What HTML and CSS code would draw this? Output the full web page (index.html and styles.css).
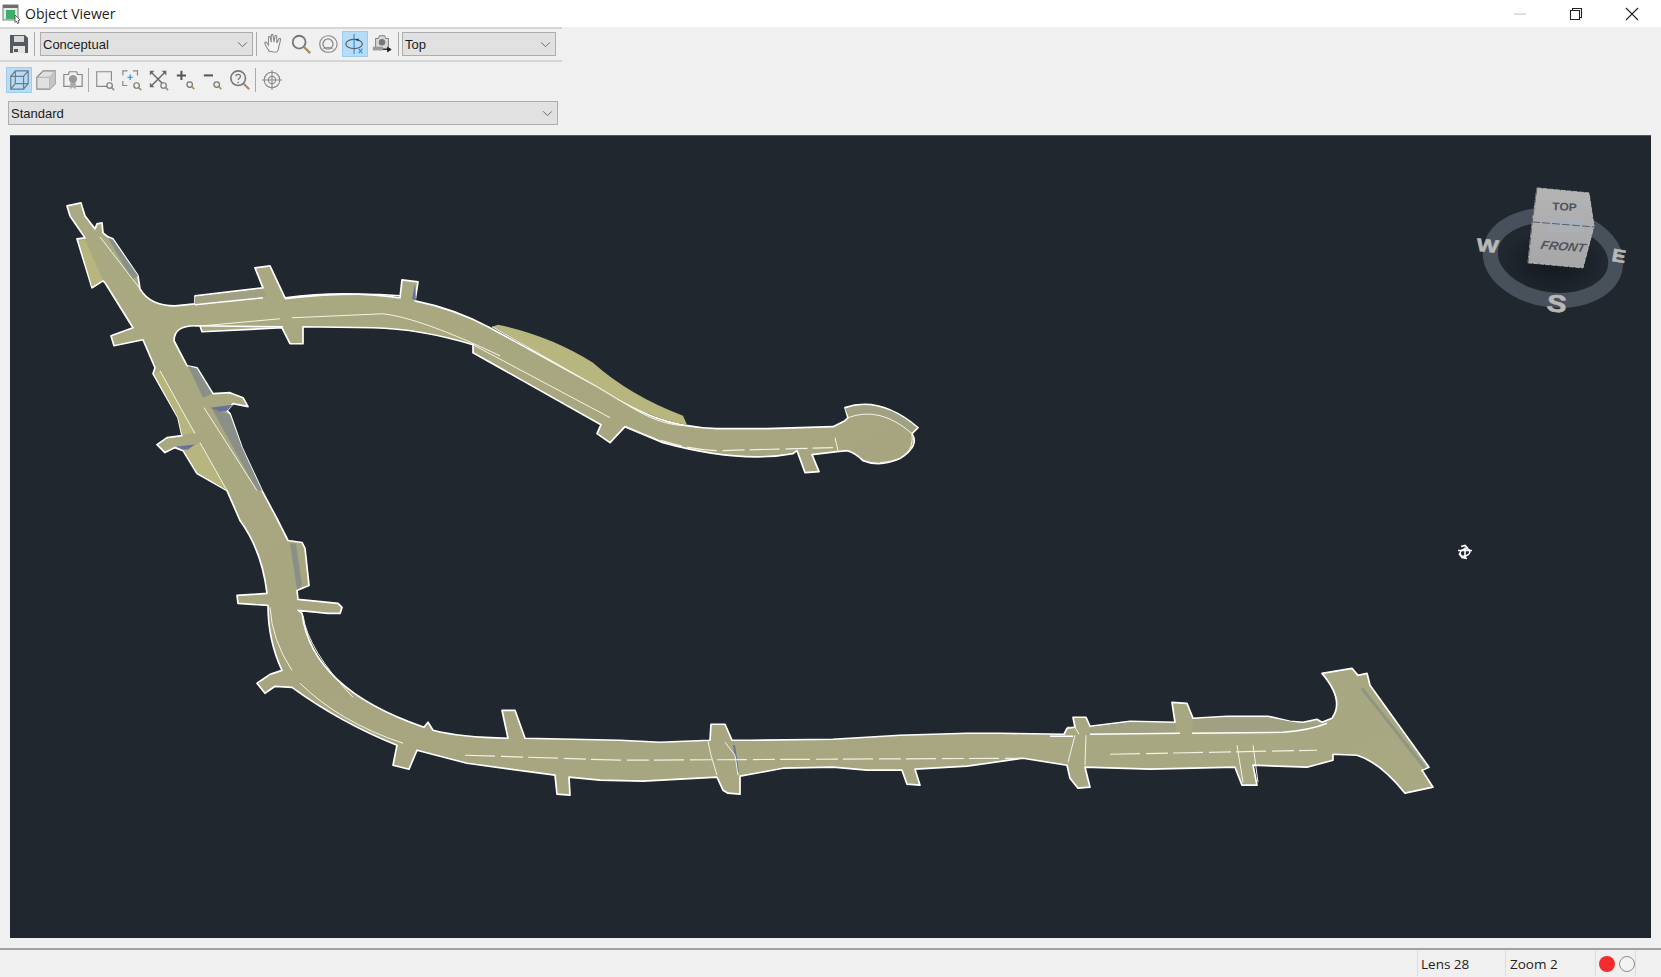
FILE: index.html
```html
<!DOCTYPE html>
<html lang="en">
<head>
<meta charset="utf-8">
<title>Object Viewer</title>
<link rel="stylesheet" href="styles.css">
</head>
<body>
<div class="app">
  <header class="titlebar">
    <svg class="appicon" viewBox="0 0 20 20"><rect x="1" y="1" width="15" height="15" fill="#e8e8e8" stroke="#7a7a7a"/><rect x="1" y="1" width="15" height="3" fill="#6d6d6d"/><rect x="4" y="6" width="9" height="9" fill="#3fae6c"/><path d="M13 11l5 5-2 .5 1 2.500-1.500.5-1-2.500-1.500 1.500z" fill="#fff" stroke="#444" stroke-width=".8"/></svg>
    <span class="title">Object Viewer</span>
    <div class="winbtns">
      <svg class="winbtn" viewBox="0 0 14 14"><path d="M1 7h12" stroke="#c4c4c4" fill="none"/></svg>
      <svg class="winbtn" viewBox="0 0 14 14"><path d="M1.500 3.500h9v9h-9zM3.500 3.500v-2h9v9h-2" stroke="#222" fill="none" stroke-width="1.100"/></svg>
      <svg class="winbtn" viewBox="0 0 14 14"><path d="M1 1l12 12M13 1L1 13" stroke="#222" fill="none" stroke-width="1.100"/></svg>
    </div>
  </header>

  <section class="tools">
    <div class="row row1">
      <svg class="ico save" viewBox="0 0 20 20"><path d="M1 1h15l3 3v15H1z" fill="#555a60"/><rect x="5" y="2" width="10" height="6" fill="#d8d8d8"/><rect x="4" y="12" width="12" height="7" fill="#e4e4e4"/><rect x="5" y="15" width="4" height="3" fill="#555a60"/></svg>
      <i class="sep"></i>
      <div class="combo c1"><span>Conceptual</span><svg class="chev" viewBox="0 0 12 8"><path d="M1 1.500l5 5 5-5" fill="none" stroke="#666" stroke-width="1.100"/></svg></div>
      <i class="sep"></i>
      <svg class="ico" viewBox="0 0 24 24"><path d="M7 20c-2-3-5-7-5-9s2-1 4 2l0-8c0-2 2-2 2 0l1 5 0-7c0-2 2-2 2 0l1 7 1-6c0-2 2-2 2 0l0 7 2-4c1-2 3-1 2 1l-2 8c0 3-2 5-3 5z" fill="#f4f4f4" stroke="#8a8a8a" stroke-width="1.200"/></svg>
      <svg class="ico" viewBox="0 0 24 24"><circle cx="10" cy="10" r="7" fill="#eef0f2" stroke="#777" stroke-width="2"/><path d="M15 15l7 7" stroke="#a98c60" stroke-width="2.600"/></svg>
      <svg class="ico" viewBox="0 0 24 24"><path d="M12 3c5 0 9 3 10 9 0 5-4 9-9 9C7 21 3 18 3 12c0-5 4-9 9-9z" fill="none" stroke="#8a8a8a" stroke-width="1.300"/><circle cx="12" cy="12" r="5.500" fill="none" stroke="#8a8a8a" stroke-width="1.400"/><path d="M6 18c2-3 10-3 12 0" fill="none" stroke="#8a8a8a"/></svg>
      <span class="btn on"><svg class="ico" viewBox="0 0 24 24"><path d="M11 1v22" stroke="#2a8fe0" stroke-width="1.200"/><ellipse cx="11" cy="12" rx="9" ry="5" fill="none" stroke="#5b6268" stroke-width="1.300"/><path d="M12 7l4-1v3z" fill="#333"/><path d="M16 17l4 5M20 17l-4 5" stroke="#2a8fe0" stroke-width="1.200"/></svg></span>
      <svg class="ico" viewBox="0 0 24 24"><path d="M5 6h3l1-3h6l1 3h3v11H5z" fill="#d8d8d8" stroke="#777"/><circle cx="12" cy="10" r="3.500" fill="#777"/><rect x="2" y="15" width="11" height="4" fill="#999"/><path d="M13 18h7M18 15.500l4 2.500-4 2.500z" stroke="#222" fill="#222"/></svg>
      <i class="sep"></i>
      <div class="combo c2"><span>Top</span><svg class="chev" viewBox="0 0 12 8"><path d="M1 1.500l5 5 5-5" fill="none" stroke="#666" stroke-width="1.100"/></svg></div>
    </div>
    <div class="row row2">
      <span class="btn on"><svg class="ico" viewBox="0 0 24 24"><path d="M3 8h14v14H3zM8 2h14v14H8zM3 8l5-6M17 8l5-6M3 22l5-6M17 22l5-6" fill="none" stroke="#6d7c85" stroke-width="1.300"/></svg></span>
      <svg class="ico" viewBox="0 0 24 24"><path d="M2 9l7-7h13v14l-6 6H2z" fill="#e0e0e0" stroke="#888" stroke-width="1.200"/><path d="M2 9h14v13M16 9l6-7" fill="none" stroke="#aaa"/><path d="M16 9l6-7v14l-6 6z" fill="#c4c4c4"/></svg>
      <svg class="ico" viewBox="0 0 24 24"><path d="M2 6h5l1-3h8l1 3h5v13H2z" fill="none" stroke="#888" stroke-width="1.300"/><circle cx="12" cy="11" r="4.500" fill="#999"/><path d="M9 15v7l3-2 3 2v-7" fill="#aaa"/></svg>
      <i class="sep"></i>
      <svg class="ico" viewBox="0 0 24 24"><path d="M14 19H3V3h16v10" fill="none" stroke="#888" stroke-width="1.200"/><circle cx="17" cy="18" r="3" fill="none" stroke="#777" stroke-width="1.300"/><path d="M19 20l3 3" stroke="#a98c60" stroke-width="1.700"/></svg>
      <svg class="ico" viewBox="0 0 24 24"><path d="M2 7V2h5M13 2h5v5M2 13v5h5" fill="none" stroke="#888" stroke-width="1.300"/><path d="M10 6v6M7 9h6" stroke="#2a8fe0" stroke-width="1.300"/><circle cx="17" cy="18" r="3" fill="none" stroke="#777" stroke-width="1.300"/><path d="M19 20l3 3" stroke="#a98c60" stroke-width="1.700"/></svg>
      <svg class="ico" viewBox="0 0 24 24"><path d="M3 3l13 13M19 3L3 19" stroke="#666" stroke-width="1.500"/><path d="M2 2h5L2 7zM20 2v5l-5-5zM2 20v-5l5 5z" fill="#666"/><circle cx="17" cy="18" r="3" fill="#f0f0f0" stroke="#777" stroke-width="1.300"/><path d="M19 20l3 3" stroke="#a98c60" stroke-width="1.700"/></svg>
      <svg class="ico" viewBox="0 0 24 24"><path d="M7 2v10M2 7h10" stroke="#555" stroke-width="2.200"/><circle cx="16" cy="17" r="3" fill="none" stroke="#777" stroke-width="1.300"/><path d="M18 19l3 3" stroke="#a98c60" stroke-width="1.700"/></svg>
      <svg class="ico" viewBox="0 0 24 24"><path d="M2 7h10" stroke="#555" stroke-width="2.200"/><circle cx="16" cy="17" r="3" fill="none" stroke="#777" stroke-width="1.300"/><path d="M18 19l3 3" stroke="#a98c60" stroke-width="1.700"/></svg>
      <svg class="ico" viewBox="0 0 24 24"><circle cx="10" cy="10" r="8" fill="#eee" stroke="#777" stroke-width="1.800"/><path d="M7.500 8c0-3 5-3 5 0 0 2-2.500 2-2.500 4M10 14v1.500" fill="none" stroke="#777" stroke-width="1.400"/><path d="M16 16l6 6" stroke="#a98c60" stroke-width="2.300"/></svg>
      <i class="sep"></i>
      <svg class="ico" viewBox="0 0 24 24"><circle cx="12" cy="12" r="8.500" fill="none" stroke="#888" stroke-width="1.200"/><circle cx="12" cy="12" r="4" fill="none" stroke="#888" stroke-width="1.200"/><path d="M12 1v22M1 12h22" stroke="#888" stroke-width="1.200"/></svg>
    </div>
  </section>

  <div class="styleline">
    <div class="combo c3"><span>Standard</span><svg class="chev" viewBox="0 0 12 8"><path d="M1 1.500l5 5 5-5" fill="none" stroke="#666" stroke-width="1.100"/></svg></div>
  </div>

  <main class="viewport">
    <svg class="scene" viewBox="10 135 1641 803" preserveAspectRatio="none">
      <defs>
        <linearGradient id="rd" x1="0" y1="0" x2="1" y2="1">
          <stop offset="0" stop-color="#aaaa82"/>
          <stop offset=".5" stop-color="#a6a57f"/>
          <stop offset="1" stop-color="#a8a882"/>
        </linearGradient>
        <linearGradient id="cube" x1="0" y1="0" x2="0" y2="1">
          <stop offset="0" stop-color="#b4b4b4"/>
          <stop offset="1" stop-color="#a6a6a8"/>
        </linearGradient>
        <radialGradient id="shade">
          <stop offset="0" stop-color="#15181d"/>
          <stop offset="1" stop-color="#1f262f"/>
        </radialGradient>
      </defs>

      <path class="road" d="M67 205L81 202 85 215 95 228 97 223 102 222 103 232 108 236 113 238 138 275 140 288Q150 305 175 305L195 303 195 295 263 287 255 267 270 265 285 297Q345 289 400 297L402 279 418 281 415 300Q455 308 490 327L583 378C625 400 650 426 717 428L767 428 833 426 845 420 848 417 845 407Q880 395 918 427L912 433Q920 445 900 458 880 467 863 460 855 452 847 450L837 451 812 454 819 471 805 472 797 450 793 453Q740 463 663 442L625 426 610 442 597 433 601 424 473 352 473 344Q420 328 373 327L303 326 303 343 290 343 282 327 202 331 200 325 195 325Q174 325 174 340L187 365 197 367 213 393 230 392 243 397 248 406 233 403 227 410 230 413 242 447 262 490 278 520 288 540 302 542 305 548 309 585 297 590 298 599 328 602 338 603 342 607 340 613 328 613 298 610 302 613C308 660 345 700 424 727L428 722 433 730Q460 737 508 738L502 710 515 710 525 738 620 740 660 742 710 740 711 724 725 724 732 740 750 740 833 739 900 735 967 733 1000 733 1064 734 1067 728 1075 727 1073 717 1086 717 1090 726 1130 721 1175 722 1172 702 1187 703 1193 718 1227 716 1268 716 1290 721 1303 722 1317 719 1322 722 1332 718Q1345 700 1322 673L1352 668 1358 675 1367 673 1370 685 1429 767 1422 770 1433 787 1405 793Q1380 762 1357 755L1333 754 1333 760 1307 767 1253 765 1257 785 1242 785 1235 767 1150 769 1085 767 1090 787 1078 788 1070 778 1067 765 1023 758 967 766 915 769 920 785 907 784 902 770 867 770 833 767 783 768 740 776 740 794 728 793 723 790 717 777 643 781 600 780 569 777 570 795 557 794 555 775 467 763 417 750 409 769 393 765 397 745Q340 722 292 687L275 686 265 693 257 683 270 674 282 670Q268 640 268 605L238 603 237 595 267 593Q262 550 240 520L227 490 197 473 183 450 175 447 165 452 157 444 167 437 182 435 178 417 153 373 155 367 143 339 114 345 111 335 133 327 105 282 103 280 92 287 77 238 85 237 70 215Z"/>

      <polygon class="light" points="79,240 92,286 103,279 85,239"/>
      <polygon class="light" points="154,373 160,370 195,432 182,434 178,417"/>
      <polygon class="light" points="184,450 200,442 227,490 198,472"/>
      <path class="light" d="M492 326L498 324Q550 335 593 362 630 395 683 415L687 424Q650 420 583 378Z"/>
      <path class="mid" d="M845 408Q880 396 917 427L911 432Q880 405 849 417Z"/>
      <polygon class="mid" points="195,304 195,296 263,288 267,296 220,301"/>
      <polygon class="mid" points="1090,727 1130,722 1175,723 1177,733 1090,733"/>
      <polygon class="mid" points="1193,719 1227,717 1268,717 1300,723 1322,723 1313,727 1283,731 1192,732"/>
      <polygon class="grey" points="108,237 113,239 138,275 132,279"/>
      <polygon class="grey" points="188,365 197,368 212,393 203,397"/>
      <polygon class="grey" points="212,408 230,414 242,447 262,490 257,490"/>
      <polygon class="grey" points="290,543 296,543 302,585 297,589"/>
      <polygon class="blue" points="210,407 233,404 227,410 220,411"/>
      <polygon class="blue" points="176,446 195,444 188,449 182,449"/>
      <polygon class="blue" points="415,283 416,300 412,298"/>
      <polygon class="blue" points="733,745 735,745 739,772 737,770"/>
      <path class="stripe" d="M1362 688L1425 768"/>

      <path class="ln" d="M100 236L140 288M105 282L132 326M160 370L195 433M200 442L227 490M204 407L257 490M203 325L280 318M292 317L383 313Q420 317 500 355M473 344L610 417M492 326L583 378C625 400 650 426 690 425M270 607Q272 640 292 670M300 683Q340 722 403 743M303 615Q308 650 353 697M848 417Q880 405 912 433Q915 460 880 462M835 437L838 450M1067 727H1075L1079 734"/>
      <path class="ln thick" d="M195 304L263 297M285 298Q345 291 400 295M195 325L283 326M1050 736H1073M1090 734L1180 733M1192 733L1283 732Q1310 730 1327 723"/>
      <path class="dash" d="M465 755L620 760 1022 758M1110 754L1317 750M627 427Q680 450 720 450L833 447"/>

      <path class="ln" d="M708 741L711 755 717 775M725 742L735 755 738 775M1075 735L1068 762M1086 735L1085 765M1237 745L1243 782M1253 745L1258 782"/>

      <ellipse cx="1553" cy="262" rx="48" ry="32" fill="url(#shade)"/>
      <ellipse class="ring" cx="1553" cy="257" rx="63" ry="42" transform="rotate(8 1553 257)"/>
      <text class="compass" transform="translate(1476 250) rotate(6) scale(1.300 1)">W</text>
      <text class="compass" transform="translate(1611 260) rotate(10) scale(1.150 1)">E</text>
      <text class="compass big" transform="translate(1546 310) rotate(6) scale(1.250 1)">S</text>
      <polygon points="1537,187 1589,192 1594,225 1583,267 1528,262 1532,223" fill="url(#cube)" stroke="#c8c8c8" stroke-width=".8" stroke-dasharray="5 1"/>
      <rect class="band" x="1547" y="217" width="37" height="15"/>
      <path class="edge" d="M1532 221L1594 226M1537 187L1532 223 1528 262"/>
      <text class="cubetxt t1" transform="translate(1552 209) rotate(3) scale(1.100 1)">TOP</text>
      <text class="cubetxt t2" transform="translate(1540 248) rotate(4) skewX(-10) scale(1.080 1)">FRONT</text>

      <g class="cursor">
        <ellipse cx="1465" cy="552" rx="5" ry="3.500" transform="rotate(-20 1465 552)"/>
        <path d="M1461 546l4-1 3 3M1459 553l3 4 5 1M1465 547v10M1458 550h14"/>
      </g>
    </svg>
  </main>

  <footer class="status">
    <div class="cell lens">Lens 28</div>
    <div class="cell zoom">Zoom 2</div>
    <div class="cell dots"><i class="dot red"></i><i class="dot empty"></i></div>
  </footer>
</div>
</body>
</html>
```

FILE: styles.css
```css
* { box-sizing: border-box; }
html, body { margin: 0; height: 100%; overflow: hidden; }
body { background: #f0f0f0; color: #1c1c1c; font-family: "Liberation Sans", Arial, sans-serif; }
.app { width: 1661px; height: 977px; display: flex; flex-direction: column; }

.titlebar { height: 27px; background: #fff; display: flex; align-items: center; padding-left: 2px; flex: none; }
.appicon { width: 20px; height: 20px; flex: none; }
.title { font-family: "Open Sans", sans-serif; font-size: 14px; margin-left: 3px; color: #222; }
.winbtns { margin-left: auto; display: flex; gap: 42px; padding-right: 22px; }
.winbtn { width: 14px; height: 14px; display: block; }

.tools { width: 562px; height: 70px; border-top: 2px solid #d6d6d6; flex: none; }
.row { display: flex; align-items: center; }
.row1 { height: 33px; padding: 0 0 1px 9px; border-bottom: 2px solid #d6d6d6; }
.row2 { height: 35px; padding-left: 5px; }
.ico { width: 22px; height: 24px; flex: none; margin: 0 2.500px; display: block; }
.save { width: 20px; height: 20px; margin: 0; }
.btn { width: 26px; height: 26px; display: flex; align-items: center; justify-content: center; flex: none; margin: 0 .500px; }
.btn .ico { margin: 0; }
.on { background: #b6dcf7; border: 1px solid #9bcdf0; }
.sep { width: 1px; height: 24px; background: #a9a9a9; margin: 0 3px; flex: none; }
.row1 .sep:nth-of-type(1) { margin: 0 5px; }
.row2 .sep { margin: 0 2px; }

.combo { height: 24px; background: #e1e1e1; border: 1px solid #adadad; display: flex; align-items: center; justify-content: space-between; padding: 0 4px 0 2px; font-size: 13px; flex: none; }
.chev { width: 11px; height: 7px; display: block; }
.c1 { width: 213px; }
.c2 { width: 154px; }
.styleline { padding: 4px 0 0 8px; flex: none; height: 38px; }
.c3 { width: 550px; }

.viewport { margin: 0 10px; height: 803px; background: #20272f; flex: none; border-top: 1px solid #555; }
.scene { width: 1641px; height: 802px; display: block; }

.road { fill: url(#rd); stroke: #fff; stroke-width: 1.700; stroke-linejoin: round; }
.light { fill: #b7b67e; }
.mid { fill: #a0a083; }
.grey { fill: #8a9088; }
.blue { fill: #69739a; }
.stripe { fill: none; stroke: #8f9485; stroke-width: 3; }
.ln { fill: none; stroke: #f3f3e6; stroke-width: 1; }
.thick { stroke-width: 1.500; stroke: #fff; }
.dash { fill: none; stroke: #f1f1e4; stroke-width: 1.200; stroke-dasharray: 30 6 22 5; }
.ring { fill: none; stroke: #48515b; stroke-width: 15; }
.compass { font-family: "Liberation Sans", sans-serif; font-weight: 700; font-size: 18px; fill: #b8b8b6; stroke: #b8b8b6; stroke-width: .6; }
.big { font-size: 24px; }
.band { fill: #abb0b8; }
.edge { fill: none; stroke: #5a5e64; stroke-width: 1; stroke-dasharray: 8 2; }
.cubetxt { font-family: "Liberation Sans", sans-serif; font-weight: 700; fill: #4e545d; }
.t1 { font-size: 11px; }
.t2 { font-size: 12px; font-style: italic; }
.cursor ellipse, .cursor path { fill: none; stroke: #fff; stroke-width: 1.600; }

.status { flex: none; height: 28px; margin-top: 10px; border-top: 2px solid #a0a0a0; display: flex; padding-left: 1417px; font-family: "Open Sans", sans-serif; font-size: 13.500px; color: #222; }
.cell { border-left: 1px solid #dcdcdc; display: flex; align-items: center; padding: 1px 0 0 3px; height: 100%; }
.lens { width: 88px; }
.zoom { width: 90px; padding-left: 4px; }
.dots { width: 41px; padding-left: 3px; gap: 4px; border-right: 1px solid #dcdcdc; }
.dot { width: 16px; height: 16px; border-radius: 50%; display: block; flex: none; }
.red { background: #f22c2f; }
.empty { background: #f3f3f3; border: 1.500px solid #8c8c8c; }
```
